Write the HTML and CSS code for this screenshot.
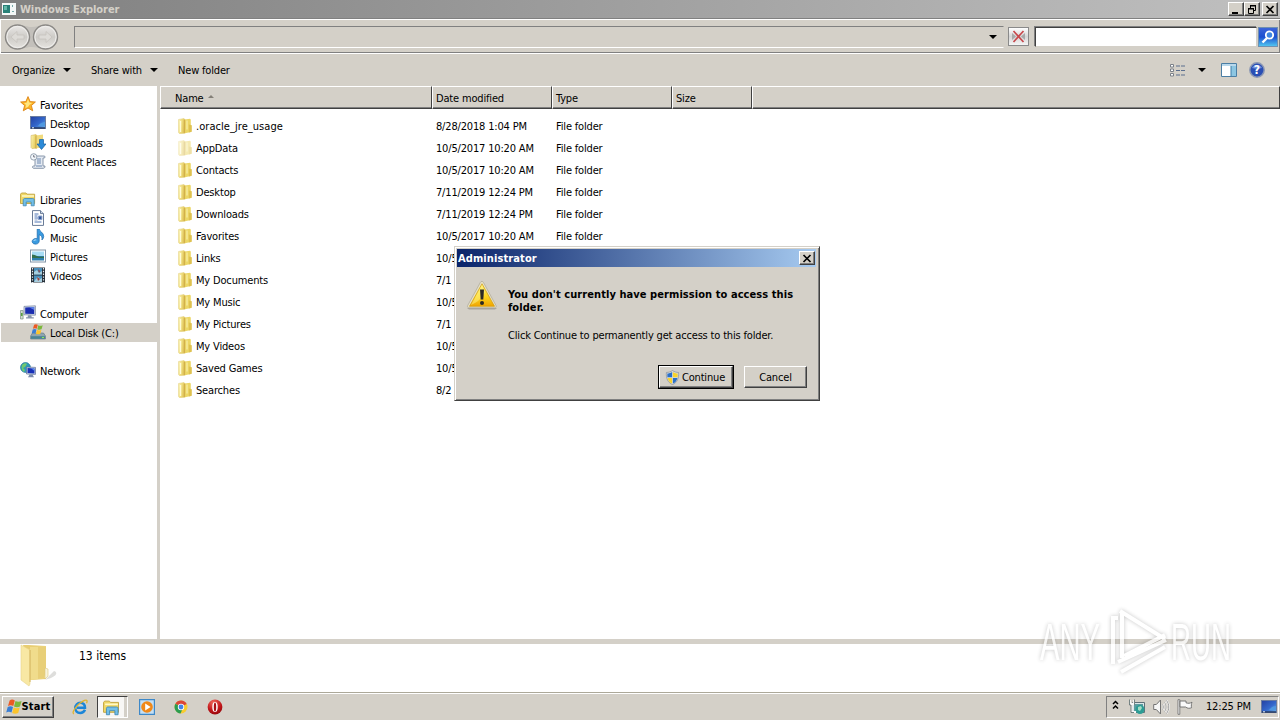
FILE: index.html
```html
<!DOCTYPE html>
<html lang="en">
<head>
  <meta charset="UTF-8">
  <meta name="viewport" content="width=device-width, initial-scale=1.0">
  <title>Windows Explorer</title>
  <link rel="stylesheet" href="styles.css">
</head>
<body>
  <!-- shared icons -->
  <svg class="sprite" width="0" height="0">
    <defs>
      <linearGradient id="gold" x1="0" x2="1" y1="0" y2="0.3">
        <stop offset="0" stop-color="#fbf3b8"/><stop offset="0.5" stop-color="#f0de80"/><stop offset="1" stop-color="#e0c458"/>
      </linearGradient>
      <linearGradient id="blue" x1="0" x2="1" y1="0" y2="1">
        <stop offset="0" stop-color="#2440a0"/><stop offset="0.55" stop-color="#3468cc"/><stop offset="1" stop-color="#6cb4e8"/>
      </linearGradient>
      <linearGradient id="warn" x1="0" x2="0" y1="0" y2="1">
        <stop offset="0" stop-color="#fff27a"/><stop offset="0.6" stop-color="#fbd21c"/><stop offset="1" stop-color="#f0a400"/>
      </linearGradient>
      <radialGradient id="opera" cx="0.4" cy="0.2" r="0.9">
        <stop offset="0" stop-color="#f06a5c"/><stop offset="0.6" stop-color="#c01418"/><stop offset="1" stop-color="#8a0408"/>
      </radialGradient>
      <linearGradient id="circle" x1="0" x2="0" y1="0" y2="1">
        <stop offset="0" stop-color="#eceae8"/><stop offset="0.5" stop-color="#cdcbc7"/><stop offset="1" stop-color="#e6e4e0"/>
      </linearGradient>
      <symbol id="folder" viewBox="0 0 16 16">
        <path d="M1.500 1.500L7 .5l1 1v13.700l-5.500.5-1-1.200z" fill="url(#gold)" stroke="#e2cf7c" stroke-width=".5"/>
        <path d="M8 1.500l5-.7.800 1V14L8 15.200z" fill="#ecd766"/>
        <path d="M6.800 2l1.300-.6v13.400l-1.300.5z" fill="#d2b04a"/>
        <path d="M11.800 6.500l3 .8v6.500l-3 .8z" fill="#dfc250"/>
        <path d="M3.500 3v11" stroke="#fffbd8" stroke-width="1.400"/>
        <path d="M10 2.500v9" stroke="#f9efab" stroke-width="1.200"/>
      </symbol>
      <symbol id="star" viewBox="0 0 16 16">
        <path d="M8 .6l2.100 5 5.300.4-4 3.500 1.300 5.300L8 12l-4.700 2.800 1.300-5.300-4-3.500 5.300-.4z" fill="#fbb224" stroke="#dc8418" stroke-width=".9"/>
        <path d="M8 3l1.300 3.600 3 .3-2.800 1.800L8 11l-2.600 1L6 9 4 7l2.600-.3z" fill="#ffe680"/>
      </symbol>
      <symbol id="desktop" viewBox="0 0 16 16">
        <rect x=".5" y="1.500" width="15" height="12" fill="url(#blue)" stroke="#6a7ca0"/>
        <path d="M1 13h14" stroke="#24365c" stroke-width="1.400"/>
        <path d="M2 12.800h2" stroke="#e8f4ff"/>
        <path d="M8 11c2-3 5-4 7-4v4z" fill="#4f98e0"/>
      </symbol>
      <symbol id="downloads" viewBox="0 0 16 16">
        <path d="M1 1.500l5-1 1 1v12.500l-5 .6-1-1z" fill="url(#gold)" stroke="#cfae50" stroke-width=".5"/>
        <path d="M6 1.500l7-1v12.500l-7 1.500z" fill="#f0da7e"/><path d="M6 1.500v13" stroke="#c9a53a"/>
        <path d="M9.500 5.500h4V10H16l-4.500 5.500L7 10h2.500z" fill="#2b8ad8" stroke="#1460a0" stroke-width=".7"/>
      </symbol>
      <symbol id="recent" viewBox="0 0 16 16">
        <path d="M5 3h9c1.500 0 1.500 2 0 2h-1v8h2c0 2-1 2.300-2 2.300H4c-2 0-2-2.300-.5-2.300H5z" fill="#e4eaf2" stroke="#7d8ca2" stroke-width=".9"/>
        <path d="M7 6h4M7 8h4M7 10h4M6 13h6" stroke="#6d88b0"/>
        <circle cx="3.700" cy="3.900" r="3.200" fill="#f4f8fc" stroke="#8b98a8" stroke-width=".9"/>
        <path d="M3.700 2v2h1.500" fill="none" stroke="#556" stroke-width=".8"/>
      </symbol>
      <symbol id="library" viewBox="0 0 16 16">
        <path d="M.5 3.200l1-1.200H6l1 1.200h7.600v9.300H.5z" fill="#f0d868" stroke="#c2a440" stroke-width=".9"/>
        <path d="M2 5h12" stroke="#fff8c8" stroke-width="1.500"/>
        <path d="M3.200 14.800V9c0-1 .6-1.500 1.500-1.500h8c1 0 1.500.6 1.500 1.500v5.800h-3V11H6.200v3.800z" fill="#72bfe8" stroke="#3f86b4" stroke-width=".8"/>
      </symbol>
      <symbol id="document" viewBox="0 0 16 16">
        <path d="M2.500.6h8l3 3v11.800h-11z" fill="#fff" stroke="#6a7c98"/>
        <path d="M10.500.6v3h3" fill="#cdd9ea" stroke="#6a7c98"/>
        <path d="M4.500 4h4M4.500 6h3M4.500 8h7M4.500 12h7" stroke="#4e74b4"/>
        <path d="M8.500 6h3.400v3.600H8.500zM4.500 10h3" fill="#34589c" stroke="#8aa2cc"/>
      </symbol>
      <symbol id="music" viewBox="0 0 16 16">
        <path d="M7.200 0h2c.3 2.600 4.600 3.400 4.500 7.500-.1 1.600-.8 2.700-1.800 3.500.7-3-.7-4.500-2.700-5.300v6.400c0 2.300-2.300 3.200-4.200 3-2.100-.2-3.600-2-2.500-3.900.9-1.400 3-2.100 4.700-1.400z" fill="#3a9be0" stroke="#1c68ac" stroke-width=".7"/>
        <path d="M3.500 12c.7-1 1.800-1.200 2.800-1" stroke="#bce4ff" fill="none"/>
      </symbol>
      <symbol id="picture" viewBox="0 0 16 16">
        <rect x=".5" y="2" width="15" height="12" fill="#fff" stroke="#8496a8"/>
        <path d="M2 3.500h12V8H2z" fill="#a8dcf4"/><path d="M2 8h12v4.500H2z" fill="#2e7fae"/>
        <path d="M2 6.500c3 0 5 2 7 2.300h5V10H2z" fill="#34704e"/>
      </symbol>
      <symbol id="video" viewBox="0 0 16 16">
        <path d="M1 .5h14v15H1z" fill="#252e38"/><path d="M4 1h8v6.500H4zM4 8.500h8V15H4z" fill="#4a90bc"/>
        <path d="M4 5l3-2 2 3 3-2v3.500H4zM5 13l3-3 2 2 2-1v4H4z" fill="#a8cede"/>
        <path d="M8 2l2 2-1 2zM7 10l3 2-2 2z" fill="#9c3c38"/>
        <path d="M2.500 1v15M13.500 1v15" stroke="#e8eef2" stroke-width="1.200" stroke-dasharray="1.400 1.400"/>
      </symbol>
      <symbol id="computer" viewBox="0 0 16 16">
        <path d="M.5 5.500h2.600V14H.5z" fill="#d0dccc" stroke="#7c8c88" stroke-width=".7"/><path d="M1 8h1.600v3H1z" fill="#58a040"/>
        <path d="M4 1.400l11.400-.6v9.400L4 9.800z" fill="#d4dcec" stroke="#6e7c98" stroke-width=".7"/>
        <path d="M5.200 2.500l9-.5v7l-9-.2z" fill="#1a2cb0"/><path d="M9 2.300l5.200-.3v3z" fill="#5c80e8"/>
        <path d="M8 10.200h3.200l.6 2h2V13.500H6V12.200h1.600z" fill="#8794ac"/>
      </symbol>
      <symbol id="flag" viewBox="0 0 16 16">
        <path d="M3.600 1.400c1.900-1.200 3.500-1 5.200.1L7.300 7c-1.700-1-3.400-1-5.300 0z" fill="#ec5a24"/>
        <path d="M9.500 2c1.800 1 3.800 1 6.100 0L14 7.600c-2.200.9-4.200.8-6-.1z" fill="#7cb83c"/>
        <path d="M1.700 8c1.900-1 3.600-1 5.300 0l-1.500 5.600c-1.800-1.100-3.500-1.100-5.300-.1z" fill="#3a7ed4"/>
        <path d="M7.700 8.500c1.800.9 3.900 1 6 .1l-1.500 5.500c-2.200.9-4.200.8-6-.1z" fill="#fcc42c"/>
      </symbol>
      <symbol id="disk" viewBox="0 0 16 16">
        <path d="M2.500 9h11l2 3v3H.6v-3z" fill="#8ea4b0" stroke="#5c7480" stroke-width=".6"/>
        <path d="M1 12.200h14v2.600H1z" fill="#4a8494"/><path d="M12 13h2v1h-2z" fill="#8cf050"/>
        <use href="#flag" x="1.500" y="-.5" width="11.500" height="12"/>
      </symbol>
      <symbol id="network" viewBox="0 0 16 16">
        <circle cx="5.500" cy="5.500" r="5" fill="#2c9aba" stroke="#1b6c94" stroke-width=".6"/>
        <path d="M2 3c2-2 4-2 5-1L5 5 3 6l2 2-1 2C2 9 1 6 2 3z" fill="#72c870"/>
        <path d="M6.500 5l9 .4v7L6.500 12z" fill="#ccd8ec" stroke="#5c6c90" stroke-width=".7"/>
        <path d="M7.500 6l7 .4v5l-7-.3z" fill="#1830b8"/><path d="M11 6.200l3.500.2V9z" fill="#5c8cec"/>
        <path d="M9.500 12.500h3l1.500 2.700H8z" fill="#7c8cac"/>
      </symbol>
      <symbol id="shield" viewBox="0 0 16 16">
        <path d="M8 .6C6 2 3.600 2.600 1.500 2.600 1 9 3 13.500 8 15.500c5-2 7-6.500 6.500-12.900C12.400 2.600 10 2 8 .6z" fill="#d8dce0" stroke="#808890" stroke-width=".7"/>
        <path d="M7.600 2v5.600H2.500V3.700C4.400 3.600 6 3 7.600 2zM8.400 8.400h4.900c-.7 2.800-2.300 4.800-4.900 6z" fill="#2a70c8"/>
        <path d="M8.400 2v5.600h5.100V3.700C11.600 3.600 10 3 8.400 2zM7.600 8.400H2.700c.7 2.800 2.300 4.800 4.900 6z" fill="#f8d42c"/>
      </symbol>
    </defs>
  </svg>

  <div class="titlebar">
    <svg class="app-icon" width="14" height="12" viewBox="0 0 14 12"><path d="M0 0h14v12H0z" fill="#f4f8f8"/><path d="M1 2h7v8H1z" fill="#288078"/><path d="M2 3h3v4H2z" fill="#64b8a8"/><path d="M10 2h1v2h-1zM10 8h2v1h-2z" fill="#7aa"/></svg>
    <h1>Windows Explorer</h1>
    <div class="win-buttons">
      <button class="win-btn"><svg width="12" height="11" viewBox="0 0 12 11"><path d="M2 8h6v2H2z"/></svg></button>
      <button class="win-btn"><svg width="12" height="11" viewBox="0 0 12 11"><path d="M4 1.500h5.500v5H8M4.500 1v3" fill="none" stroke="#000"/><path d="M4 1h6v1.500H4zM2 4h6v1.500H2z"/><path d="M2.500 4.500h5v5h-5z" fill="none" stroke="#000"/></svg></button>
      <button class="win-btn close"><svg width="12" height="11" viewBox="0 0 12 11"><path d="M2.500 2l7 7M9.500 2l-7 7" stroke="#000" stroke-width="1.700"/></svg></button>
    </div>
  </div>

  <div class="addressbar">
    <svg class="history" width="56" height="28" viewBox="0 0 56 28">
      <path d="M15 2c6 0 9 2 13.500 2S38 2 42 2v24c-4 0-9-2-13.500-2S21 26 15 26z" fill="#c3c0bb"/>
      <circle cx="14.500" cy="14" r="12" fill="url(#circle)" stroke="#8b8986" stroke-width="1.400"/>
      <circle cx="42.500" cy="14" r="12" fill="url(#circle)" stroke="#8b8986" stroke-width="1.400"/>
      <circle cx="14.500" cy="14" r="10.600" fill="none" stroke="#f0efed"/>
      <circle cx="42.500" cy="14" r="10.600" fill="none" stroke="#f0efed"/>
      <path d="M8 14l6-5.500v3.500h7v4h-7v3.500zM49 14l-6-5.500v3.500h-7v4h7v3.500z" fill="#dddbd7" stroke="#c6c3be" stroke-width=".8"/>
    </svg>
    <div class="address"><i class="arrow"></i></div>
    <button class="stop"><svg width="15" height="13" viewBox="0 0 15 13"><path d="M1 3l4 3.500L1 10zM14 3l-4 3.500L14 10z" fill="#a8a8a8"/><path d="M2.500 1l10 11M12.500 1l-10 11" stroke="#c8484c" stroke-width="1.700"/></svg></button>
    <div class="search"></div>
    <button class="go"><svg width="18" height="18" viewBox="0 0 18 18"><circle cx="10.500" cy="7" r="3.700" fill="#3f86e0" stroke="#fff" stroke-width="1.800"/><path d="M8 10l-4.500 4.500" stroke="#fff" stroke-width="2.400"/></svg></button>
  </div>

  <div class="toolbar">
    <span class="organize">Organize</span><i class="arrow"></i>
    <span class="share">Share with</span><i class="arrow"></i>
    <span class="new-folder">New folder</span>
    <div class="view-tools">
      <svg width="16" height="13" viewBox="0 0 16 13"><path d="M.5.500h3v2.500h-3zM.5 5h3v2.500h-3zM.5 9.500h3V12h-3z" fill="#fff" stroke="#7a8088"/><path d="M6 2h4M11 2h4M6 6.500h4M11 6.500h4M6 11h4M11 11h4" stroke="#5b6f8e"/></svg>
      <i class="arrow"></i>
      <svg class="preview" width="16" height="14" viewBox="0 0 16 14"><path d="M.5.500h15v13H.5z" fill="#fff" stroke="#4b7ea4"/><path d="M1 1h14v2H1z" fill="#b8d8ec"/><path d="M10 3h5v10h-5z" fill="#8cc6e2"/><path d="M10 3v10" stroke="#3c7ca8"/></svg>
      <svg width="16" height="16" viewBox="0 0 16 16"><circle cx="8" cy="8" r="7.200" fill="#2a4eb4" stroke="#8c98b4" stroke-width="1.500"/><path d="M3 6c1-4 9-4 10 0-3 1-7 1-10 0z" fill="#6c8edc"/><text x="8" y="12.300" text-anchor="middle" class="help-mark">?</text></svg>
    </div>
  </div>

  <div class="main">
    <div class="nav">
      <div class="nav-item root"><svg><use href="#star"/></svg><span>Favorites</span></div>
      <div class="nav-item"><svg><use href="#desktop"/></svg><span>Desktop</span></div>
      <div class="nav-item"><svg><use href="#downloads"/></svg><span>Downloads</span></div>
      <div class="nav-item"><svg><use href="#recent"/></svg><span>Recent Places</span></div>
      <div class="nav-item root spaced"><svg><use href="#library"/></svg><span>Libraries</span></div>
      <div class="nav-item"><svg><use href="#document"/></svg><span>Documents</span></div>
      <div class="nav-item"><svg><use href="#music"/></svg><span>Music</span></div>
      <div class="nav-item"><svg><use href="#picture"/></svg><span>Pictures</span></div>
      <div class="nav-item"><svg><use href="#video"/></svg><span>Videos</span></div>
      <div class="nav-item root spaced"><svg><use href="#computer"/></svg><span>Computer</span></div>
      <div class="nav-item selected"><svg><use href="#disk"/></svg><span>Local Disk (C:)</span></div>
      <div class="nav-item root spaced"><svg><use href="#network"/></svg><span>Network</span></div>
    </div>

    <div class="files">
      <div class="row header">
        <span>Name <i class="sort"></i></span><span>Date modified</span><span>Type</span><span>Size</span><span></span>
      </div>
      <div class="list">
        <div class="row"><span class="wide"><svg><use href="#folder"/></svg>.oracle_jre_usage</span><span>8/28/2018 1:04 PM</span><span>File folder</span></div>
        <div class="row hidden-item"><span><svg><use href="#folder"/></svg>AppData</span><span>10/5/2017 10:20 AM</span><span>File folder</span></div>
        <div class="row"><span><svg><use href="#folder"/></svg>Contacts</span><span>10/5/2017 10:20 AM</span><span>File folder</span></div>
        <div class="row"><span><svg><use href="#folder"/></svg>Desktop</span><span>7/11/2019 12:24 PM</span><span>File folder</span></div>
        <div class="row"><span><svg><use href="#folder"/></svg>Downloads</span><span>7/11/2019 12:24 PM</span><span>File folder</span></div>
        <div class="row"><span><svg><use href="#folder"/></svg>Favorites</span><span>10/5/2017 10:20 AM</span><span>File folder</span></div>
        <div class="row"><span><svg><use href="#folder"/></svg>Links</span><span>10/5</span></div>
        <div class="row"><span><svg><use href="#folder"/></svg>My Documents</span><span>7/1</span></div>
        <div class="row"><span><svg><use href="#folder"/></svg>My Music</span><span>10/5</span></div>
        <div class="row"><span><svg><use href="#folder"/></svg>My Pictures</span><span>7/1</span></div>
        <div class="row"><span><svg><use href="#folder"/></svg>My Videos</span><span>10/5</span></div>
        <div class="row"><span><svg><use href="#folder"/></svg>Saved Games</span><span>10/5</span></div>
        <div class="row"><span><svg><use href="#folder"/></svg>Searches</span><span>8/2</span></div>
      </div>
    </div>
  </div>

  <div class="details">
    <svg width="40" height="44" viewBox="0 0 40 44">
      <path d="M26 36l9-9c4 1 4 6-10 9z" fill="#dededc"/>
      <path d="M4 1h5l18 1v33l-15 1z" fill="#e8cd72"/>
      <path d="M11 3l16-.5V34l-16 2z" fill="#f0dc8c"/>
      <path d="M19 3l8-.3V26l-2 8-6 1z" fill="#e8cf78"/>
      <path d="M26 24l3 1v7l-3 3z" fill="#f8f4dc" stroke="#dcc880" stroke-width=".6"/>
      <path d="M2 1l9 5v34l-1 2-8-6z" fill="#f8e8a4" stroke="#e8d48c" stroke-width=".6"/>
      <path d="M11 6v32" stroke="#d4b45c"/>
    </svg>
    <span>13 items</span>
  </div>

  <div class="taskbar">
    <button class="start"><svg width="16" height="16"><use href="#flag"/></svg>Start</button>
    <svg class="ie" width="16" height="16" viewBox="0 0 16 16">
      <path d="M13 10.800C12 13 10.300 14 8.200 14c-3 0-4.900-2.100-4.900-5S5.500 3.800 8.400 3.800s4.700 2 4.600 4.900H5" fill="none" stroke="#1c86d8" stroke-width="2.500"/>
      <path d="M2 14.800C-1.500 14 6 4 12.500 1.400c3-1.100 3 .8 2 2.800" fill="none" stroke="#e0b430" stroke-width="1.300"/>
    </svg>
    <div class="task-active"><svg width="17" height="17"><use href="#library"/></svg></div>
    <svg class="wmp" width="16" height="16" viewBox="0 0 16 16"><path d="M.6.600h14.800v14.800H.6z" fill="#c4dff4" stroke="#3d88c8" stroke-width="1.200"/><circle cx="8" cy="8" r="5.800" fill="#f08818"/><path d="M6.200 4.600L11.600 8l-5.400 3.400z" fill="#fff"/></svg>
    <svg class="chrome" width="16" height="16" viewBox="0 0 16 16">
      <circle cx="8" cy="8" r="6.500" fill="#f8cc30"/>
      <path d="M8 8L2.400 4.700A6.500 6.500 0 0 1 13.700 5z" fill="#dc4638"/>
      <path d="M8 8L2.400 4.700A6.500 6.500 0 0 0 7.500 14.500L9.500 10z" fill="#2c9c50"/>
      <circle cx="8" cy="8" r="3.200" fill="#fff"/><circle cx="8" cy="8" r="2.400" fill="#4484e8"/>
    </svg>
    <svg class="opera" width="16" height="16" viewBox="0 0 16 16"><circle cx="8" cy="8" r="7.400" fill="url(#opera)"/><ellipse cx="8" cy="8" rx="2.700" ry="5" fill="#fff"/><ellipse cx="8" cy="8" rx="1.200" ry="4.600" fill="#a81014"/></svg>
    <div class="tray">
      <svg class="chevron" width="7" height="10" viewBox="0 0 7 10"><path d="M1 4l2.500-2.500L6 4M1 8.500L3.500 6 6 8.500" fill="none" stroke="#000" stroke-width="1.500"/></svg>
      <svg class="net" width="16" height="16" viewBox="0 0 16 16"><path d="M3.500 3.500h12v10h-12z" fill="#dce8e8" stroke="#607078"/><path d="M5 5h9v7H5z" fill="#5c9ca0"/><circle cx="11" cy="10.500" r="4.500" fill="#2c9c94"/><path d="M9 8l3-1 1 2-2 3-2-1z" fill="#a4dcc4"/><path d="M1 1v4h4V1M3 5v8h4" fill="none" stroke="#f8f8f8" stroke-width="1.800"/><path d="M.5.500V6H2v7.500h3M5.500.500V6" fill="none" stroke="#566" stroke-width=".8"/></svg>
      <svg class="sound" width="17" height="16" viewBox="0 0 17 16"><path d="M.7 5.500h2.600L7.500 1v14l-4.200-4.500H.7z" fill="#f6f6f6" stroke="#737373"/><path d="M9.500 5.500c1 1.500 1 3.500 0 5M11.500 3.500c2 2.500 2 6.500 0 9M13.500 1.500c3 4 3 9 0 13" fill="none" stroke="#fff" stroke-width="1.800"/><path d="M9.500 5.500c1 1.500 1 3.500 0 5M11.500 3.500c2 2.500 2 6.500 0 9M13.500 1.500c3 4 3 9 0 13" fill="none" stroke="#808080" stroke-width=".8"/></svg>
      <svg class="action" width="16" height="16" viewBox="0 0 16 16"><path d="M1 .7h1.800v14.600H1z" fill="#fff" stroke="#666" stroke-width=".8"/><path d="M3 2h6v1.800c2 .8 4 .6 6-.6-.6 1.500-1 3.600-.4 5.500-2.200.9-4.200.8-6-.7H3z" fill="#fafafa" stroke="#6b6b6b" stroke-width=".9"/></svg>
      <span class="clock">12:25 PM</span>
      <svg width="16" height="16"><use href="#desktop"/></svg>
    </div>
  </div>

  <div class="dialog">
    <div class="dialog-title">
      <h2>Administrator</h2>
      <button class="win-btn"><svg width="12" height="11" viewBox="0 0 12 11"><path d="M2.500 2l7 7M9.500 2l-7 7" stroke="#000" stroke-width="1.700"/></svg></button>
    </div>
    <div class="dialog-body">
      <svg class="warning" width="32" height="30" viewBox="0 0 32 30">
        <path d="M1 28h30l-2 1.500H3z" fill="#a8a49e"/>
        <path d="M14.300 2.500c.8-1.500 2.400-1.500 3.200 0L30 25.500c.7 1.400 0 2.300-1.300 2.300H3c-1.300 0-2-.9-1.300-2.300z" fill="#e6e0c4" stroke="#aaa698" stroke-width=".7"/>
        <path d="M16 3.800L28.500 26.300h-25z" fill="url(#warn)" stroke="#d09a10" stroke-width=".7"/>
        <path d="M16 5l3 7c-2 5-7 10-14 13z" fill="#fff68c" opacity=".5"/>
        <path d="M14 9.500h4L17.300 19.500h-2.600z" fill="#2c2a24"/><circle cx="16" cy="23" r="2" fill="#2c2a24"/>
      </svg>
      <div class="message">
        <strong>You don't currently have permission to access this folder.</strong>
        <p>Click Continue to permanently get access to this folder.</p>
      </div>
    </div>
    <div class="dialog-buttons">
      <button class="continue"><svg width="15" height="15"><use href="#shield"/></svg>Continue</button>
      <button class="cancel">Cancel</button>
    </div>
  </div>

  <svg class="watermark" width="210" height="76" viewBox="0 0 210 76">
    <text x="4" y="54" textLength="60" lengthAdjust="spacingAndGlyphs">ANY</text>
    <text x="135" y="54" textLength="60" lengthAdjust="spacingAndGlyphs">RUN</text>
    <path d="M82 12h-5v46M86 6v46M84 5l45 28M88 50l41-21M82 56l48-22M85 66l44-25"/>
  </svg>
</body>
</html>
```
FILE: styles.css
```css
* {
    box-sizing: border-box;
}

body {
    margin: 0;
    width: 1280px;
    height: 720px;
    overflow: hidden;
    display: flex;
    flex-direction: column;
    background-color: #d4d0c8;
    color: #000;
    font-family: "DejaVu Sans Condensed", "DejaVu Sans", sans-serif;
    font-stretch: condensed;
    font-size: 11px;
    letter-spacing: -0.17px;
    white-space: nowrap;
}

svg {
    display: block;
    flex: none;
}

.sprite {
    position: absolute;
}

h1, h2 {
    margin: 0;
    font-size: 11px;
    letter-spacing: -0.08px;
}

button {
    margin: 0;
    padding: 0;
    display: flex;
    align-items: center;
    justify-content: center;
    font: inherit;
    letter-spacing: inherit;
    color: #000;
    background-color: #d4d0c8;
    border: 1px solid;
    border-color: #fff #404040 #404040 #fff;
}

.arrow {
    border: 4px solid transparent;
    border-top-color: #000;
    border-bottom: none;
}

/* title bar */
.titlebar {
    height: 18px;
    flex: none;
    display: flex;
    align-items: center;
    padding: 0 2px 0 2px;
    background: linear-gradient(to right, #808080, #c0c0c0);
}

.titlebar h1 {
    margin-left: 4px;
    color: #d4d0c8;
}

.win-buttons {
    margin-left: auto;
    display: flex;
}

.win-btn {
    width: 16px;
    height: 14px;
    box-shadow: inset -1px -1px #808080;
}

.win-btn.close {
    margin-left: 2px;
}

/* address bar */
.addressbar {
    height: 36px;
    flex: none;
    display: flex;
    align-items: center;
    padding: 1px 2px 0 3px;
    border-top: 1px solid #808080;
    border-bottom: 1px solid #fff;
    box-shadow: inset 1px 1px #fff, inset -1px -1px #808080;
}

.address {
    margin-left: 15px;
    width: 930px;
    height: 22px;
    display: flex;
    align-items: center;
    justify-content: flex-end;
    padding-right: 6px;
    border: 1px solid;
    border-color: #808080 #d4d0c8 #fff #808080;
}

.stop {
    margin-left: 4px;
    width: 21px;
    height: 19px;
    background: linear-gradient(#fff, #d6d6d6 50%, #f4f4f4);
    border: 1px solid #8a8a8a;
}

.search {
    margin-left: 6px;
    width: 222px;
    height: 20px;
    background-color: #fff;
    border: 1px solid;
    border-color: #404040 #d4d0c8 #d4d0c8 #404040;
    box-shadow: -1px -1px #808080;
}

.go {
    margin-left: auto;
    width: 20px;
    height: 20px;
    background: linear-gradient(#3c64d8, #1c50d0 50%, #50c4f0);
    border: 1px solid #7090b0;
}

/* toolbar */
.toolbar {
    height: 32px;
    flex: none;
    display: flex;
    align-items: center;
    padding: 0 15px 0 12px;
}

.organize {
    width: 51px;
}

.share {
    margin-left: 20px;
    width: 59px;
}

.new-folder {
    margin-left: 20px;
}

.view-tools {
    margin-left: auto;
    display: flex;
    align-items: center;
    gap: 12px;
}

.view-tools .preview {
    margin-left: 3px;
}

.help-mark {
    font-size: 12px;
    font-weight: bold;
    fill: #fff;
    letter-spacing: 0;
}

/* nav and file list */
.main {
    height: 553px;
    flex: none;
    display: flex;
}

.nav {
    width: 157px;
    padding-top: 9px;
    background-color: #fff;
}

.nav-item {
    height: 19px;
    display: flex;
    align-items: center;
    padding-left: 30px;
}

.nav-item.root {
    padding-left: 20px;
}

.nav-item.spaced {
    margin-top: 19px;
}

.nav-item.selected {
    margin-left: 1px;
    padding-left: 29px;
    background-color: #d4d0c8;
}

.nav-item svg {
    width: 16px;
    height: 16px;
    margin: -1px 4px 0 0;
}

.nav-item span {
    padding-top: 2px;
}

.files {
    flex: 1;
    margin-left: 3px;
    background-color: #fff;
}

.row {
    height: 22px;
    display: grid;
    grid-template-columns: 272px 120px 120px 80px 1fr;
}

.row span {
    display: flex;
    align-items: center;
    padding-left: 4px;
}

.row span:first-child {
    padding-left: 17px;
}

.row .wide {
    letter-spacing: 0.05px;
}

.header {
    height: 23px;
    background-color: #d4d0c8;
}

.row.header span {
    padding-top: 1px;
    border-top: 1px solid #fff;
    border-left: 1px solid #fff;
    border-right: 1px solid #404040;
    border-bottom: 1px solid #404040;
    box-shadow: inset 0 -1px #808080;
}

.header span {
    padding-left: 3px;
}

.row.header span:first-child {
    padding-left: 14px;
}

.sort {
    margin: -3px 0 0 4px;
    border: 3px solid transparent;
    border-bottom-color: #848078;
    border-top: none;
}

.list {
    padding-top: 6px;
}

.list svg {
    width: 16px;
    height: 16px;
    margin: -1px 3px 0 0;
}

.hidden-item svg {
    opacity: 0.5;
}

/* details pane */
.details {
    height: 54px;
    flex: none;
    display: flex;
    padding-left: 19px;
    background-color: #fff;
    border-top: 5px solid #d4d0c8;
    border-bottom: 1px solid #aca899;
}

.details span {
    margin: 5px 0 0 20px;
    font-size: 12px;
    letter-spacing: 0;
}

/* taskbar */
.taskbar {
    height: 27px;
    flex: none;
    display: flex;
    align-items: center;
    padding: 0 0 1px 2px;
    border-top: 1px solid #fff;
}

.start {
    width: 52px;
    height: 22px;
    font-weight: bold;
    letter-spacing: 0.15px;
    box-shadow: inset -1px -1px #808080;
}

.ie {
    margin-left: 18px;
}

.task-active {
    margin-left: 9px;
    width: 31px;
    height: 22px;
    padding: 2px 0 0 5px;
    background-color: #f8f7f5;
    border: 1px solid;
    border-color: #404040 #fff #fff #404040;
    box-shadow: inset -3px 0 #d4d0c8;
}

.wmp {
    margin-left: 11px;
}

.chrome, .opera {
    margin-left: 18px;
}

.tray {
    margin: 0 1px 0 auto;
    width: 173px;
    height: 22px;
    display: flex;
    align-items: center;
    padding-left: 5px;
    border: 1px solid;
    border-color: #808080 #fff #fff #808080;
}

.chevron {
    margin-bottom: 3px;
}

.net {
    margin-left: 10px;
}

.sound {
    margin-left: 8px;
}

.action {
    margin-left: 7px;
}

.clock {
    margin-left: 13px;
    width: 55px;
}

/* permission dialog */
.dialog {
    position: absolute;
    left: 454px;
    top: 246px;
    width: 366px;
    height: 155px;
    padding: 2px 3px 0 2px;
    background-color: #d4d0c8;
    border: 1px solid;
    border-color: #d4d0c8 #404040 #404040 #d4d0c8;
    box-shadow: inset 1px 1px #fff, inset -1px -1px #808080;
}

.dialog-title {
    height: 18px;
    display: flex;
    align-items: center;
    justify-content: space-between;
    padding: 0 1px 0 1px;
    background: linear-gradient(to right, #0a246a, #a6caf0);
}

.dialog-title h2 {
    color: #fff;
    letter-spacing: 0.1px;
}

.dialog-body {
    display: flex;
    padding: 13px 0 0 9px;
}

.message {
    width: 300px;
    margin: 8px 0 0 10px;
    line-height: 13px;
    white-space: normal;
}

.message strong {
    letter-spacing: 0.07px;
}

.message p {
    margin: 15px 0 0;
}

.dialog-buttons {
    display: flex;
    align-items: center;
    justify-content: flex-end;
    gap: 10px;
    margin: 23px 9px 0 0;
}

.dialog-buttons button {
    box-shadow: inset -1px -1px #808080;
}

.continue {
    width: 76px;
    height: 24px;
    gap: 2px;
    padding-right: 2px;
    outline: 1px solid #000;
    outline-offset: -1px;
    border: 2px solid;
    border-color: #fff #404040 #404040 #fff;
}

.cancel {
    width: 63px;
    height: 22px;
}

/* watermark over the corner */
.watermark {
    position: absolute;
    left: 1036px;
    top: 606px;
    filter: drop-shadow(0 0 2px rgba(0, 0, 0, 0.3));
    opacity: 0.75;
}

.watermark text {
    font-family: "Liberation Sans", Arial, sans-serif;
    font-size: 52px;
    letter-spacing: 0;
    fill: #fff;
}

.watermark path {
    fill: none;
    stroke: #fff;
    stroke-width: 4;
}
```
